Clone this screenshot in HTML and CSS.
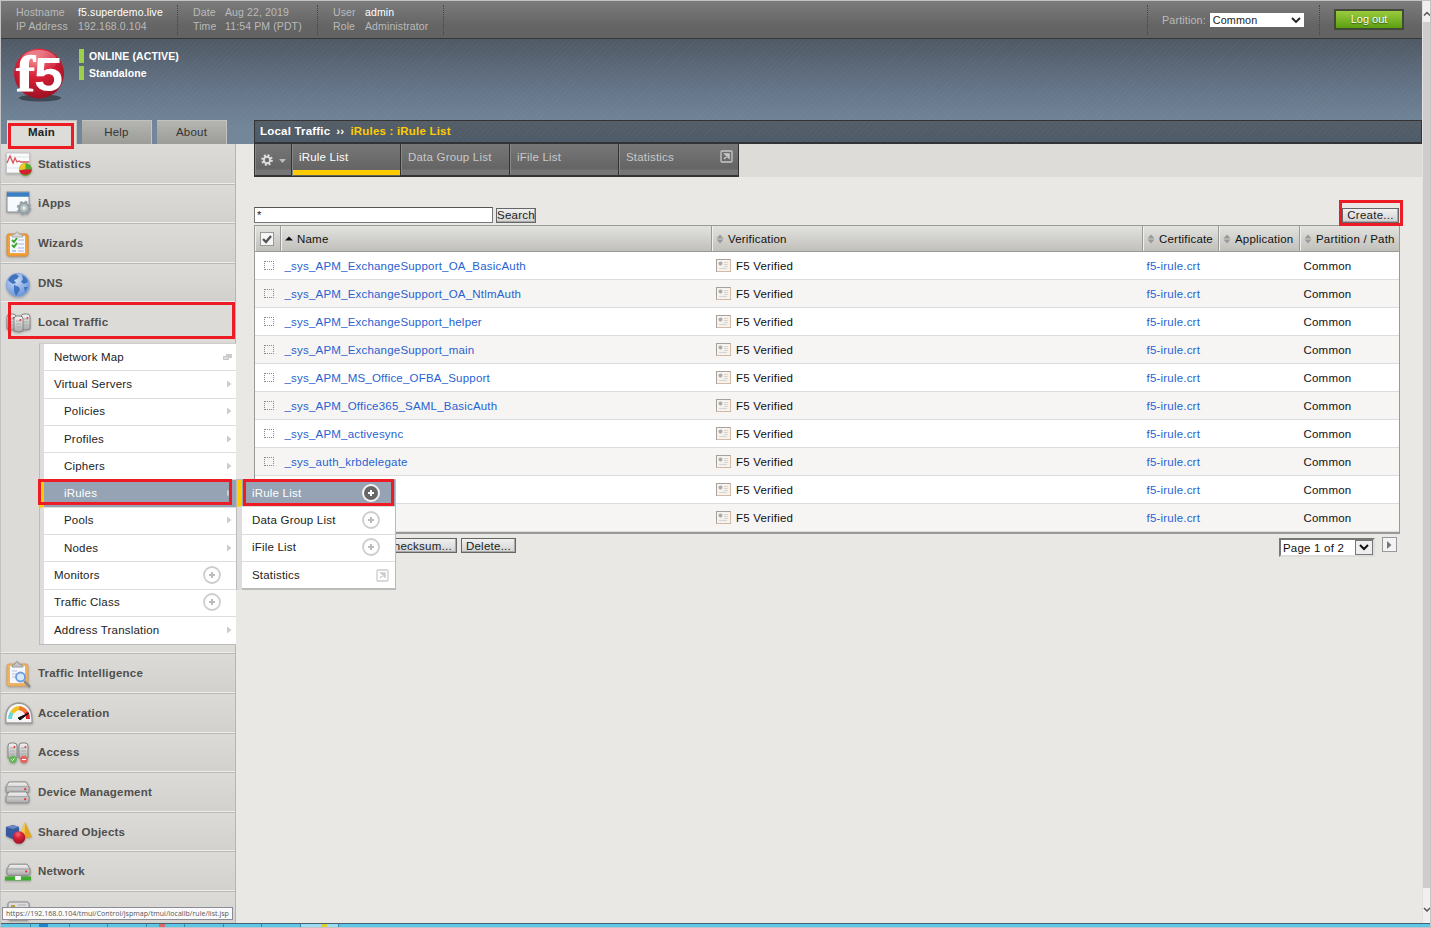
FILE: index.html
```
<!DOCTYPE html>
<html lang="en">
<head>
<meta charset="utf-8">
<title>iRule List</title>
<link rel="stylesheet" href="styles.css">
</head>
<body>
<svg class="defs" aria-hidden="true">
  <defs>
    <linearGradient id="metal" x1="0" y1="0" x2="0" y2="1"><stop offset="0" stop-color="#f4f4f4"/><stop offset="1" stop-color="#a9a9a9"/></linearGradient>
    <radialGradient id="ball" cx=".42" cy=".25" r=".8"><stop offset="0" stop-color="#ee6c72"/><stop offset=".4" stop-color="#d81f36"/><stop offset="1" stop-color="#990f22"/></radialGradient>
    <radialGradient id="globe" cx=".4" cy=".3" r=".8"><stop offset="0" stop-color="#c9dcf6"/><stop offset="1" stop-color="#5d8ad2"/></radialGradient>
    <linearGradient id="shine" x1="0" y1="0" x2="0" y2="1"><stop offset="0" stop-color="#fff" stop-opacity=".35"/><stop offset="1" stop-color="#fff" stop-opacity="0"/></linearGradient>
  </defs>
  <symbol id="plus" viewBox="0 0 18 18"><circle cx="9" cy="9" r="8" fill="#fff" stroke="#cdcdcd" stroke-width="1.8"/><path d="M9 6v6M6 9h6" stroke="#bbb" stroke-width="2"/></symbol>
  <symbol id="arrow" viewBox="0 0 5 8"><path d="M0 0.500L4.500 4L0 7.500Z" fill="#ccc"/></symbol>
  <symbol id="sort" viewBox="0 0 8 10"><path d="M4 .5l3.500 4H.5zM4 9.500l3.500-4H.5z" fill="#999"/></symbol>
  <symbol id="ext" viewBox="0 0 13 13"><rect x="1" y="1" width="11" height="11" rx="1" fill="none" stroke="currentColor" stroke-width="1.300"/><path d="M4 9l4-4M5 4h4v4z" stroke="currentColor" stroke-width="1.500" fill="currentColor"/></symbol>
  <symbol id="cert" viewBox="0 0 15 13"><rect x=".5" y=".5" width="14" height="12" fill="#f6f3ef" stroke="#a8a09a"/><path d="M.5 12.500h14V.5" stroke="#d3bba6" fill="none"/><circle cx="4.500" cy="4.500" r="2" fill="#aaa"/><path d="M8 3.500h4M8 5.500h4M8 7.500h4M3 9.500h8" stroke="#d8d4d0"/></symbol>
  <symbol id="tower" viewBox="0 0 11 18"><path d="M1 4Q1 1 4 1h3q3 0 3 3v12q-4.500 2-9 0z" fill="url(#metal)" stroke="#858585"/><path d="M3 6h5M3 9h5M3 12h5" stroke="#aaa"/><circle cx="7.500" cy="5" r="1" fill="#e33"/></symbol>
  <symbol id="box" viewBox="0 0 26 13"><path d="M4 1h18l3 5v5q0 1.500-2 1.500H3q-2 0-2-1.500V6z" fill="url(#metal)" stroke="#858585"/><path d="M1 6h24" stroke="#999"/><circle cx="21" cy="8.500" r="1.200" fill="#e33"/></symbol>
</svg>
<div class="window">
  <div class="page">
    <header class="topbar">
      <dl class="info host"><dt>Hostname</dt><dd class="strong">f5.superdemo.live</dd><dt>IP Address</dt><dd>192.168.0.104</dd></dl>
      <dl class="info date"><dt>Date</dt><dd>Aug 22, 2019</dd><dt>Time</dt><dd>11:54 PM (PDT)</dd></dl>
      <dl class="info user"><dt>User</dt><dd class="strong">admin</dd><dt>Role</dt><dd>Administrator</dd></dl>
      <div class="partition"><span>Partition:</span><div class="select">Common<svg width="10" height="7" viewBox="0 0 10 7"><path d="M1 1l4 4 4-4" fill="none" stroke="#222" stroke-width="1.900"/></svg></div></div>
      <div class="logout"><button>Log out</button></div>
    </header>
    <section class="banner">
      <div class="brand">
        <svg class="logo" width="54" height="56" viewBox="0 0 54 56"><ellipse cx="27" cy="50" rx="21" ry="3.500" fill="#333c46" opacity=".8"/><circle cx="26" cy="25.500" r="25" fill="url(#ball)"/><ellipse cx="26" cy="13" rx="18" ry="11" fill="url(#shine)"/><text class="logo-f" x="3" y="43" textLength="19" lengthAdjust="spacingAndGlyphs">f</text><text class="logo-5" x="21" y="43" textLength="29" lengthAdjust="spacingAndGlyphs">5</text></svg>
        <div class="status"><p>ONLINE (ACTIVE)</p><p>Standalone</p></div>
      </div>
      <div class="bannerfoot">
        <nav class="tabs"><a class="on">Main</a><a>Help</a><a>About</a></nav>
        <div class="crumb">Local Traffic<span class="sep">››</span><b>iRules : iRule List</b></div>
      </div>
    </section>
    <div class="columns">
      <aside class="sidebar">
        <a class="nav"><svg viewBox="0 0 30 28"><rect x="2.500" y="2" width="23" height="20" fill="#fbfbfb" stroke="#c6c6cc"/><path d="M3 17h22M3 6h22" stroke="#dfe3ee"/><path d="M3 12l3-7 3 7 2-5 2 4 2-1 2 1h8" fill="none" stroke="#d9545b" stroke-width="1.300"/><circle cx="21.500" cy="18.500" r="6.500" fill="#54ab30"/><path d="M21.500 18.500V12a6.500 6.500 0 0 0-6.500 7z" fill="#f1c82a"/><path d="M21.500 18.500l-6.300 1a6.500 6.500 0 0 0 12.500-1z" fill="#d51f2d"/></svg>Statistics</a>
        <a class="nav"><svg viewBox="0 0 30 28"><rect x="3" y="2" width="22" height="20" fill="#f7fafd" stroke="#8b9098"/><path d="M3 4.500h22" stroke="#3c7fc0" stroke-width="4.500"/><circle cx="20" cy="18" r="6" fill="#9ba7ac" stroke="#94a2a8" stroke-width="2.500" stroke-dasharray="2.600 2.100"/><circle cx="20" cy="18" r="4.500" fill="#b5bfc2" stroke="#8c9a9f"/><circle cx="20" cy="18" r="1.700" fill="#eee"/></svg>iApps</a>
        <a class="nav"><svg viewBox="0 0 30 28"><rect x="3" y="4" width="21" height="22" rx="2" fill="#f2a03a" stroke="#d98c30"/><path d="M6 6h15v17H6z" fill="#f5f8ff"/><path d="M14 10h6M14 14h6M14 18h6M14 21h6" stroke="#a6b3da"/><path d="M8 10l2 2 3-4M8 15l2 2 3-4" fill="none" stroke="#3da42c" stroke-width="2"/><path d="M8 21h4" stroke="#b8c8dc" stroke-width="2"/><path d="M8 7q0-3 3-3 2-4 4 0 4 0 4 3z" fill="#d8d8d8" stroke="#aaa"/></svg>Wizards</a>
        <a class="nav"><svg viewBox="0 0 30 28"><circle cx="14" cy="15" r="11.700" fill="url(#globe)" stroke="#8aa9dc"/><path d="M4 10q3-6 8-6l3 2-2 3-3 1 2 3-3 1-3-2zM18 5q5 2 6 7l-4 2-3-2 2-3zM10 15l5 2 1 3-4 6-2-5zM20 17l4 0-3 5z" fill="#4273bf"/></svg>DNS</a>
        <div class="open">
          <a class="nav"><svg viewBox="0 0 30 28"><use href="#tower" x="2" y="4" width="11" height="18"/><use href="#tower" x="16" y="4" width="11" height="18"/><use href="#tower" x="9" y="6" width="11" height="18"/></svg>Local Traffic</a>
          <div class="submenu">
            <a>Network Map<svg class="end" width="9" height="7" viewBox="0 0 9 7"><path d="M3 1h6v4H3z" fill="#ccc"/><path d="M.5 3.500h5v3h-5z" fill="#ddd" stroke="#c5c5c5"/></svg></a>
            <a>Virtual Servers<svg class="tri"><use href="#arrow"/></svg></a>
            <a class="deep">Policies<svg class="tri"><use href="#arrow"/></svg></a>
            <a class="deep">Profiles<svg class="tri"><use href="#arrow"/></svg></a>
            <a class="deep">Ciphers<svg class="tri"><use href="#arrow"/></svg></a>
            <a class="deep hot">iRules<svg class="tri"><use href="#arrow"/></svg></a>
            <a class="deep">Pools<svg class="tri"><use href="#arrow"/></svg></a>
            <a class="deep">Nodes<svg class="tri"><use href="#arrow"/></svg></a>
            <a>Monitors<svg class="plus"><use href="#plus"/></svg></a>
            <a>Traffic Class<svg class="plus"><use href="#plus"/></svg></a>
            <a>Address Translation<svg class="tri"><use href="#arrow"/></svg></a>
          </div>
        </div>
        <a class="nav"><svg viewBox="0 0 30 28"><rect x="3" y="4" width="21" height="22" rx="2" fill="#eeb263" stroke="#dba35c"/><path d="M6 6h15v17H6z" fill="#f5f8ff"/><path d="M8 11h5M8 14h5M8 17h5" stroke="#b6bfd8"/><path d="M8 7q0-3 3-3 2-5 4 0 4 0 4 3z" fill="#c4c4c4" stroke="#999"/><path d="M20 21l6 6" stroke="#888" stroke-width="2.500"/><circle cx="16.500" cy="17" r="4.500" fill="#d8e8fa" stroke="#6c9cdc" stroke-width="1.800"/></svg>Traffic Intelligence</a>
        <a class="nav"><svg viewBox="0 0 30 28"><path d="M2 23Q0 4 15 3q14 1 13 20z" fill="#f6f6f6" stroke="#999" stroke-width="1.400"/><g fill="none" stroke-width="4"><path d="M6 19q0-4 2-6.500" stroke="#6cd8d2"/><path d="M8 12.500q3-4 7-4.500" stroke="#f2c21d"/><path d="M15 8q4 .5 7 4" stroke="#f3772a"/><path d="M22 12q2 3 2 7" stroke="#e6202b"/></g><path d="M14 18l11-5-9 7z" fill="#111" stroke="#111"/></svg>Acceleration</a>
        <a class="nav"><svg viewBox="0 0 30 28"><use href="#tower" x="3" y="3" width="11" height="18"/><use href="#tower" x="14" y="3" width="11" height="18"/><circle cx="9" cy="20.500" r="3.800" fill="#66b75a"/><path d="M7.500 20.500l1 1 2-2" stroke="#fff" fill="none"/><circle cx="20" cy="20.500" r="3.800" fill="#e26560"/><path d="M18 20.500h4" stroke="#fff"/></svg>Access</a>
        <a class="nav"><svg viewBox="0 0 30 28"><use href="#box" x="1" y="2" width="25" height="12.500"/><use href="#box" x="1" y="12" width="25" height="12.500"/></svg>Device Management</a>
        <a class="nav"><svg viewBox="0 0 30 28"><path d="M2 8l7-2 6 2v10l-7 2-6-3z" fill="#38589d"/><path d="M2 8l7-2 6 2-6 2z" fill="#6988c5"/><path d="M21 3l7 15q-6 2-12 0z" fill="#e1a51d"/><path d="M21 3l-5.500 14 5 2z" fill="#f5ca4f"/><circle cx="15" cy="18.500" r="6.300" fill="url(#ball)"/></svg>Shared Objects</a>
        <a class="nav"><svg viewBox="0 0 30 28"><path d="M1 20.500h26" stroke="#3eac2c" stroke-width="4"/><use href="#box" x="2" y="5" width="25" height="13"/><rect x="11" y="18" width="6" height="4" rx="1" fill="#f5f5f5"/></svg>Network</a>
        <a class="nav"><svg viewBox="0 0 30 28"><rect x="4" y="4" width="21" height="18" rx="2" fill="#ddd" stroke="#888"/><path d="M7 7h4v4H7z" fill="#b59a45"/><path d="M14 7h8M14 11h8" stroke="#aaa"/></svg>System</a>
      </aside>
      <main>
        <nav class="toolbar">
          <a class="gear"><svg width="26" height="14" viewBox="0 0 26 14"><circle cx="6" cy="6" r="4.600" fill="none" stroke="#ddd" stroke-width="2.400" stroke-dasharray="1.900 1.713"/><circle cx="6" cy="6" r="3.200" fill="none" stroke="#ddd" stroke-width="2"/><path d="M18 5h7l-3.500 4z" fill="#bbb"/></svg></a>
          <a class="on">iRule List</a><a>Data Group List</a><a>iFile List</a><a class="last">Statistics<svg width="13" height="13"><use href="#ext"/></svg></a>
        </nav>
        <div class="content">
          <div class="search"><div class="field">*</div><button class="btn find">Search</button><button class="btn create">Create...</button></div>
          <table>
            <thead><tr>
              <th class="c-check"><svg width="14" height="14" viewBox="0 0 14 14"><rect x=".5" y=".5" width="13" height="13" fill="#f6f6f6" stroke="#999"/><path d="M3 7l3 3 5-6" fill="none" stroke="#555" stroke-width="2.400"/></svg></th>
              <th class="c-name"><svg width="8" height="5" viewBox="0 0 8 5"><path d="M0 4.500L4 .5l4 4z" fill="#111"/></svg>Name</th>
              <th class="c-ver"><svg width="8" height="10"><use href="#sort"/></svg>Verification</th>
              <th class="c-cert"><svg width="8" height="10"><use href="#sort"/></svg>Certificate</th>
              <th class="c-app"><svg width="8" height="10"><use href="#sort"/></svg>Application</th>
              <th class="c-part"><svg width="8" height="10"><use href="#sort"/></svg>Partition / Path</th>
            </tr></thead>
            <tbody>
              <tr><td><i></i></td><td><a>_sys_APM_ExchangeSupport_OA_BasicAuth</a></td><td class="v"><svg><use href="#cert"/></svg>F5 Verified</td><td><a>f5-irule.crt</a></td><td></td><td>Common</td></tr>
              <tr><td><i></i></td><td><a>_sys_APM_ExchangeSupport_OA_NtlmAuth</a></td><td class="v"><svg><use href="#cert"/></svg>F5 Verified</td><td><a>f5-irule.crt</a></td><td></td><td>Common</td></tr>
              <tr><td><i></i></td><td><a>_sys_APM_ExchangeSupport_helper</a></td><td class="v"><svg><use href="#cert"/></svg>F5 Verified</td><td><a>f5-irule.crt</a></td><td></td><td>Common</td></tr>
              <tr><td><i></i></td><td><a>_sys_APM_ExchangeSupport_main</a></td><td class="v"><svg><use href="#cert"/></svg>F5 Verified</td><td><a>f5-irule.crt</a></td><td></td><td>Common</td></tr>
              <tr><td><i></i></td><td><a>_sys_APM_MS_Office_OFBA_Support</a></td><td class="v"><svg><use href="#cert"/></svg>F5 Verified</td><td><a>f5-irule.crt</a></td><td></td><td>Common</td></tr>
              <tr><td><i></i></td><td><a>_sys_APM_Office365_SAML_BasicAuth</a></td><td class="v"><svg><use href="#cert"/></svg>F5 Verified</td><td><a>f5-irule.crt</a></td><td></td><td>Common</td></tr>
              <tr><td><i></i></td><td><a>_sys_APM_activesync</a></td><td class="v"><svg><use href="#cert"/></svg>F5 Verified</td><td><a>f5-irule.crt</a></td><td></td><td>Common</td></tr>
              <tr><td><i></i></td><td><a>_sys_auth_krbdelegate</a></td><td class="v"><svg><use href="#cert"/></svg>F5 Verified</td><td><a>f5-irule.crt</a></td><td></td><td>Common</td></tr>
              <tr><td></td><td></td><td class="v"><svg><use href="#cert"/></svg>F5 Verified</td><td><a>f5-irule.crt</a></td><td></td><td>Common</td></tr>
              <tr><td></td><td></td><td class="v"><svg><use href="#cert"/></svg>F5 Verified</td><td><a>f5-irule.crt</a></td><td></td><td>Common</td></tr>
            </tbody>
          </table>
          <div class="actions">
            <div class="left"><button class="btn">Checksum...</button><button class="btn">Delete...</button></div>
            <div class="pager"><div class="pagesel">Page 1 of 2<span><svg width="10" height="7" viewBox="0 0 10 7"><path d="M1 1l4 4 4-4" fill="none" stroke="#111" stroke-width="2"/></svg></span></div><div class="next"><svg width="5" height="8" viewBox="0 0 5 8"><path d="M0 0l4.500 4L0 8z" fill="#777"/></svg></div></div>
          </div>
        </div>
      </main>
    </div>
  </div>
  <div class="scroll"><div class="cap"><svg width="7" height="6" viewBox="0 0 7 6"><path d="M1 4.500l3-3 3 3" fill="none" stroke="#555" stroke-width="1.500"/></svg></div><div class="thumb"></div><div class="cap foot"><svg width="7" height="6" viewBox="0 0 7 6"><path d="M1 1l3 3 3-3" fill="none" stroke="#555" stroke-width="1.500"/></svg></div></div>
</div>
<div class="taskbar"><span></span><span class="blue"></span><span></span><span class="narrow"></span><span class="red"></span><span></span><span></span><span></span><span class="gold"></span></div>
<div class="flyout">
  <a class="hot">iRule List<svg width="20" height="20" viewBox="0 0 20 20"><circle cx="10" cy="10" r="8" fill="#666" stroke="#f4f4f4" stroke-width="2"/><path d="M10 7v6M7 10h6" stroke="#fff" stroke-width="2"/></svg></a>
  <a>Data Group List<svg class="plus"><use href="#plus"/></svg></a>
  <a>iFile List<svg class="plus"><use href="#plus"/></svg></a>
  <a>Statistics<svg class="ext" width="13" height="13"><use href="#ext"/></svg></a>
</div>
<div class="link-status">https://192.168.0.104/tmui/Control/jspmap/tmui/locallb/rule/list.jsp</div>
<div class="mark m-main"></div><div class="mark m-local"></div><div class="mark m-irules"></div><div class="mark m-list"></div><div class="mark m-create"></div>
</body>
</html>
```
FILE: styles.css
```
* { box-sizing: border-box; }
body { margin: 0; width: 1431px; height: 928px; overflow: hidden; position: relative; display: flex; flex-direction: column; font: 11.5px/14px "Liberation Sans", Arial, sans-serif; letter-spacing: .2px; color: #111; background: #c3c3c3; }
p, dl, dd { margin: 0; }
svg { flex: none; display: block; }
.defs { position: absolute; width: 0; height: 0; }
.window { display: flex; height: 923px; padding: 1px 1px 0; overflow: hidden; }
.page { width: 1421px; display: flex; flex-direction: column; background: #e9e8e4; }

.topbar { flex: none; height: 38px; display: flex; align-items: flex-start; padding-top: 4px; background: linear-gradient(#7c7c7c, #656565 65%, #626262); border-bottom: 1px solid #383838; font-size: 10.5px; line-height: 14px; color: #bababa; letter-spacing: .12px; }
.info { display: grid; align-content: start; height: 30px; border-right: 1px dotted #444; padding-left: 15px; }
.strong { color: #fff; }
.host { width: 177px; grid-template-columns: 62px 1fr; }
.date { width: 140px; grid-template-columns: 32px 1fr; }
.user { width: 126px; grid-template-columns: 32px 1fr; }
.partition { margin-left: auto; width: 173px; height: 30px; padding-left: 14px; display: flex; align-items: center; gap: 4px; border-left: 1px dotted #444; border-right: 1px dotted #444; font-size: 10.8px; }
.select { width: 94px; height: 14px; background: #fff; color: #222; display: flex; align-items: center; justify-content: space-between; padding: 0 3px; }
.logout { width: 102px; height: 30px; padding: 4px 0 0 14px; }
.logout button { width: 70px; height: 21px; padding: 0; border: 2px solid #414a38; background: linear-gradient(#9acb3d, #5ba012); color: #fff; font: 11px "Liberation Sans", Arial, sans-serif; text-shadow: 0 1px 1px #335511; padding-bottom: 2px; }

.banner { flex: none; height: 105px; display: flex; flex-direction: column; justify-content: space-between; background: repeating-linear-gradient(135deg, rgba(255,255,255,.025) 0 1px, transparent 1px 4px), linear-gradient(#4f5964, #66768a 50%, #738699 85%, #738699); }
.brand { display: flex; padding: 9px 0 0 12px; }
.logo-f, .logo-5 { fill: #fff; font-weight: bold; letter-spacing: 0; }
.logo-f { font-family: "Liberation Serif", serif; font-size: 51px; stroke: #fff; }
.logo-5 { font-family: "Liberation Sans", sans-serif; font-size: 49px; }
.status { padding: 1px 0 0 12px; display: flex; flex-direction: column; gap: 3px; font-size: 10.5px; font-weight: bold; color: #fff; letter-spacing: .12px; }
.status p { height: 14px; border-left: 5px solid #9bd04f; padding-left: 5px; line-height: 14px; }
.bannerfoot { display: flex; height: 24px; }
.tabs { width: 253px; display: flex; gap: 5px; padding-left: 6px; }
.tabs a { width: 70px; height: 24px; text-align: center; line-height: 23px; background: linear-gradient(#b4b4b0, #9c9c98); color: #333; border-right: 1px solid #c5c5c2; border-top: 1px solid #c2c2be; }
.tabs .on { background: #dddcd8; font-weight: bold; color: #222; }
.crumb { flex: 1; display: flex; padding-left: 5px; line-height: 21px; font-weight: bold; color: #fff; border: 1px solid #333; border-bottom-width: 2px; background: repeating-linear-gradient(135deg, rgba(255,255,255,.025) 0 1px, transparent 1px 4px), linear-gradient(#555e66, #4d5a69); }
.crumb .sep { margin: 0 6px; }
.crumb b { color: #ffcc00; }

.columns { flex: 1; min-height: 0; display: flex; overflow: hidden; }
.sidebar { width: 235px; border-right: 1px solid #b5b5b5; background: #d9d8d4; }
.nav { height: 39.6px; display: flex; align-items: center; padding: 0 0 0 3px; gap: 4px; font-weight: bold; color: #4f4f4f; background: linear-gradient(#dcdbd7, #d2d1cd); border-top: 1px solid #b9b9b6; border-bottom: 1px solid #eeedeb; }
.nav svg { width: 30px; height: 28px; margin-top: 2px; filter: drop-shadow(0 1px 1px rgba(0,0,0,.25)); }
.nav:first-child { border-top-color: #dcdbd7; }
.open { height: 351px; background: #dcdbd7; border-bottom: 1px solid #eee; }
.open .nav { background: #dcdbd7; border-bottom-color: transparent; }
.submenu { margin: 1px 0 0 38px; width: 197px; position: relative; border-left: 1px solid #bbb; border-top: 1px solid #ccc; border-bottom: 1px solid #bbb; }
.submenu a { height: 27.3px; display: flex; align-items: center; padding: 0 4px 1px 10px; background: #fff; border-left: 4px solid #ddd; border-bottom: 1px solid #ddd; color: #222; }
.submenu a:last-child { border-bottom: 0; }
.submenu .deep { padding-left: 20px; }
.submenu .hot { background: #95a3b4; border-left-color: #fc0; color: #fff; }
.submenu svg { margin-left: auto; }
.tri { width: 5px; height: 8px; }
.plus { width: 18px; height: 18px; }
.submenu .plus { margin-right: 11px; }

main { flex: 1; padding-left: 18px; }
.toolbar { display: flex; width: 1168px; height: 33px; background: linear-gradient(90deg, transparent 485px, #dddcd8 485px); color: #c8c8c8; }
.toolbar a { width: 109px; height: 33px; padding: 6px 7px 0; border: solid #333; border-width: 0 1px 2px 0; box-shadow: inset 1px 0 #888; background: linear-gradient(#777, #646464 25px, #757575 26px, #757575); }
.toolbar .gear { width: 38px; padding: 10px 6px 0; border-left-width: 1px; }
.toolbar .on { color: #fff; border-bottom: 1px solid #333; background: linear-gradient(#777, #646464 26px, #fc0 26px, #fc0 31px, #646464 31px); }
.toolbar .last { width: 120px; display: flex; justify-content: space-between; padding-right: 5px; }
.content { width: 1146px; }
.search { display: flex; align-items: center; padding-top: 28px; height: 48px; gap: 3px; }
.field { width: 239px; height: 16px; border: 1px solid #777; border-top-color: #555; background: #fff; padding: 0 2px; font-size: 11px; }
.btn { font: 11.5px/12px "Liberation Sans", Arial, sans-serif; height: 15px; padding: 0 5px; border: 1px solid #666; background: linear-gradient(#f0f0f0, #d2d2d2); box-shadow: inset -1px -1px #aaa; letter-spacing: .25px; color: #222; white-space: nowrap; }
.find { padding: 0; width: 40px; }
.create { margin: 0 1px 0 auto; width: 57px; padding: 0; }
table { width: 1146px; table-layout: fixed; border-collapse: separate; border-spacing: 0; border: 1px solid #999; border-bottom: 2px solid #999; }
th { height: 26px; padding: 0 4px; font-weight: normal; text-align: left; background: linear-gradient(#e2e2df, #c1c0bb); border-right: 1px solid #999; border-bottom: 1px solid #999; box-shadow: inset 1px 0 #f0f0ee; white-space: nowrap; }
th svg { display: inline-block; margin-right: 4px; vertical-align: -1px; }
th:last-child { border-right: 0; }
th.c-check { width: 26px; padding: 3px 0 0 5px; }
th.c-check svg { margin: 0; }
.c-name { width: 431px; }
.c-name svg { vertical-align: 2px; }
.c-ver { width: 431px; }
.c-cert { width: 76px; }
.c-app { width: 81px; }
td { height: 28.05px; padding: 0 4px 0 3.5px; border-bottom: 1px solid #dcdcdc; background: #fff; }
tr:nth-child(even) td { background: #f6f5f3; }
td a { color: #2862d2; }
td i { display: block; width: 10px; height: 9px; border: 1px dotted #888; margin-left: 5px; }
.v { display: flex; align-items: center; gap: 5px; padding-left: 4px; }
.v svg { width: 15px; height: 13px; }
.actions { display: flex; justify-content: space-between; padding-top: 4px; }
.left { width: 262px; display: flex; justify-content: flex-end; gap: 4px; }
.left .btn { padding: 0 4px; }
.pager { display: flex; gap: 7px; padding-right: 3px; }
.pagesel { width: 96px; height: 19px; border: 2px solid #777; border-right-color: #ddd; border-bottom-color: #ddd; background: #fff; display: flex; justify-content: space-between; padding-left: 2px; line-height: 17px; }
.pagesel span { width: 18px; border: 1px solid #777; background: #eee; display: flex; align-items: center; justify-content: center; }
.next { width: 15px; height: 15px; margin-top: -1px; border: 1px solid #999; background: #f3f3f3; display: flex; align-items: center; justify-content: center; }

.scroll { width: 8px; display: flex; flex-direction: column; background: #cdcdcd; border-left: 1px solid #e2e2e2; }
.cap { height: 21px; background: #f0f0f0; padding-top: 10px; }
.thumb { flex: 1; }
.foot { height: 35px; padding-top: 19px; }
.taskbar { height: 5px; margin-left: 1px; width: 1429px; background: #5fc6ea; border-top: 1px solid #44626c; border-bottom: 1px solid #c3c3c3; display: flex; }
.taskbar span { width: 38.5px; border-right: 1px solid #3b89a8; }
.taskbar span:first-child { width: 30px; }
.taskbar .blue { background: linear-gradient(90deg, transparent 8px, #2084d0 8px, #2084d0 17px, transparent 17px); }
.taskbar .red { background: linear-gradient(90deg, transparent 12px, #d66 12px, #d66 18px, transparent 18px); }
.taskbar .gold { background: linear-gradient(90deg, #9cddf3 20px, #e7cb32 20px, #e7cb32 26px, #9cddf3 26px); }

.flyout { position: absolute; left: 236px; top: 479px; width: 160px; height: 111px; border: 1px solid #bbb; border-bottom-width: 2px; background: #fff; }
.flyout a { display: flex; align-items: center; justify-content: space-between; height: 27.4px; padding: 0 15px 1px 10px; border-left: 5px solid #ddd; border-bottom: 1px solid #ddd; color: #222; }
.flyout a:last-child { border-bottom: 0; padding-right: 6px; }
.flyout .hot { background: #95a3b4; border-left-color: #fc0; color: #fff; padding-right: 14px; }
.flyout .ext { color: #ccc; }
.link-status { position: absolute; left: 2px; top: 907px; width: 231px; height: 13px; border: 1px solid #8c8c98; background: #fafafa; padding-left: 3px; font: 7px/11px "Open Sans", "Noto Sans", sans-serif; color: #555; letter-spacing: .04px; white-space: nowrap; }
.mark { position: absolute; border: 3px solid #ed1c24; }
.m-main { left: 8px; top: 123px; width: 66px; height: 26px; }
.m-local { left: 8px; top: 302px; width: 227px; height: 37px; }
.m-irules { left: 38px; top: 479px; width: 194px; height: 26px; }
.m-list { left: 243px; top: 479px; width: 151px; height: 27px; }
.m-create { left: 1339px; top: 200px; width: 64px; height: 26px; }
```
